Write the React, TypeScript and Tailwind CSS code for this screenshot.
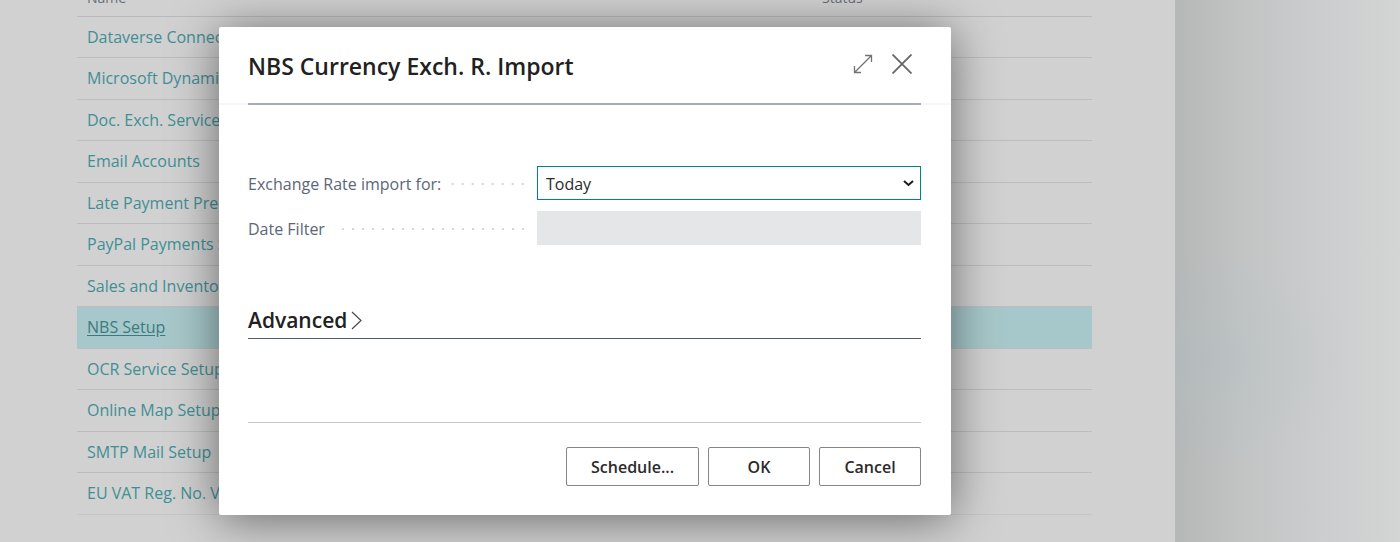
import { useState } from "react";

const rows = [
  "Dataverse Connection Setup",
  "Microsoft Dynamics 365 Connection Setup",
  "Doc. Exch. Service Setup",
  "Email Accounts",
  "Late Payment Prediction Setup",
  "PayPal Payments Standard",
  "Sales and Inventory Forecast Setup",
  "NBS Setup",
  "OCR Service Setup",
  "Online Map Setup",
  "SMTP Mail Setup",
  "EU VAT Reg. No. Validation Service",
];

const leader =
  "h-[2px] flex-1 bg-[linear-gradient(to_left,#d6d6d6_2px,transparent_2px)] bg-[length:10px_2px] bg-right bg-repeat-x";
const button =
  "h-[39px] rounded-[2px] border border-[#868686] bg-white px-6 text-[16px] font-semibold text-[#2b2b2b]";

function ServiceTable() {
  return (
    <table className="-mt-[25px] w-full table-fixed border-collapse text-left">
      <thead>
        <tr className="h-[41px] border-b border-[#b9babf] text-[14px] text-[#6b6f78]">
          <th className="w-[735px] px-[10px] pb-[10px] align-bottom leading-4 font-normal">Name</th>
          <th className="px-[10px] pb-[10px] align-bottom leading-4 font-normal">Status</th>
        </tr>
      </thead>
      <tbody>
        {rows.map((name) => {
          const selected = name === "NBS Setup";
          return (
            <tr
              key={name}
              className={`h-[41px] border-b border-[#bcbdbe] even:h-[42px] last:h-[41px] last:border-[#c6c6c6] ${
                selected ? "bg-[#a7c8ca]" : ""
              }`}
            >
              <td className="overflow-hidden px-[10px] text-[16px] leading-6 whitespace-nowrap">
                <a
                  href="#setup"
                  className={selected ? "text-[#3a7b80] underline underline-offset-2" : "text-[#3f8f94]"}
                >
                  {name}
                </a>
              </td>
              <td />
            </tr>
          );
        })}
      </tbody>
    </table>
  );
}

function ImportDialog() {
  const [period, setPeriod] = useState("Today");
  return (
    <section
      role="dialog"
      aria-labelledby="dialog-title"
      className="flex-1 self-start rounded-[2px] bg-white shadow-[0_4px_48px_rgba(0,0,0,0.5)]"
    >
      <header className="border-b-2 border-[#f7f7f7] pr-[30px] pl-[29px]">
        <div className="-mb-[2px] flex h-[78px] items-center justify-between border-b-2 border-[#a6abb6] pr-[9px]">
          <h1 id="dialog-title" className="pt-0.5 text-[23px] leading-8 font-semibold text-[#212121]">
            NBS Currency Exch. R. Import
          </h1>
          <div className="flex items-center gap-[19px] pb-0.5">
            <button type="button" aria-label="Expand">
              <svg className="size-5" viewBox="0 0 20 20" fill="none" stroke="#737373" strokeWidth="1.3">
                <path d="M1.5 18.5 18.5 1.5M12 1.5h6.5V8M1.5 12v6.5H8" />
              </svg>
            </button>
            <button type="button" aria-label="Close">
              <svg className="size-5" viewBox="0 0 20 20" fill="none" stroke="#666" strokeWidth="1.8">
                <path d="M.5.5l19 19M19.5.5l-19 19" />
              </svg>
            </button>
          </div>
        </div>
      </header>

      <div className="pr-[30px] pl-[29px]">
        <div className="flex flex-col gap-[11px] pt-[61px] text-[16px]">
          <div className="flex h-[34px] items-center">
            <div className="flex w-[276px] items-center gap-[9px] pt-0.5">
              <label htmlFor="period" className="text-[#5c6678]">
                Exchange Rate import for:
              </label>
              <span className={leader} />
            </div>
            <div className="relative ml-[13px] h-full flex-1">
              <select
                id="period"
                value={period}
                onChange={(e) => setPeriod(e.target.value)}
                className="h-full w-full appearance-none border border-[#008489] bg-white px-2 pt-0.5 text-[#2b2b2b] outline-none"
              >
                <option>Today</option>
                <option>Date Filter</option>
              </select>
              <svg
                className="pointer-events-none absolute top-[14px] right-[7px] h-[7px] w-[11px]"
                viewBox="0 0 11 7"
                fill="none"
                stroke="#1c1c1c"
                strokeWidth="2"
              >
                <path d="M1 1l4.500 4L10 1" />
              </svg>
            </div>
          </div>
          <div className="flex h-[34px] items-center">
            <div className="flex w-[276px] items-center gap-[9px] pt-0.5">
              <label htmlFor="date-filter" className="text-[#5c6678]">
                Date Filter
              </label>
              <span className={leader} />
            </div>
            <input id="date-filter" disabled className="ml-[13px] h-full min-w-0 flex-1 bg-[#e5e6e8] px-2" />
          </div>
        </div>

        <h2 className="mt-[58px] border-b border-[#505c6d]">
          <button type="button" className="flex h-[35px] items-center gap-1 text-[21px] font-semibold text-[#212121]">
            Advanced
            <svg className="h-[19px] w-[11px]" viewBox="0 0 11 19" fill="none" stroke="#4a4a4a" strokeWidth="1.2">
              <path d="M1 1l9 8.500L1 18" />
            </svg>
          </button>
        </h2>

        <footer className="mt-[83px] flex justify-end gap-[9px] border-t border-[#c8c8c8] pt-6 pb-[29px]">
          <button type="button" className={`${button} w-[133px]`}>Schedule...</button>
          <button type="button" className={`${button} w-[102px]`}>OK</button>
          <button type="button" className={`${button} w-[102px]`}>Cancel</button>
        </footer>
      </div>
    </section>
  );
}

export default function App() {
  return (
    <div className="flex h-screen overflow-hidden bg-[#d1d1d1] font-['Open_Sans',sans-serif]">
      <main className="relative min-w-0 flex-1 overflow-hidden pr-[83px] pl-[77px]">
        <ServiceTable />
        <div className="absolute inset-0 flex pt-[27px] pr-[224px] pl-[219px]">
          <ImportDialog />
        </div>
      </main>
      <aside className="w-[225px] bg-[radial-gradient(ellipse_150px_110px_at_30px_360px,rgba(168,190,196,0.25),transparent),linear-gradient(to_right,#b6b7b7,#c2c4c4_30%,#cccdce_65%,#d3d4d4)]" />
    </div>
  );
}
